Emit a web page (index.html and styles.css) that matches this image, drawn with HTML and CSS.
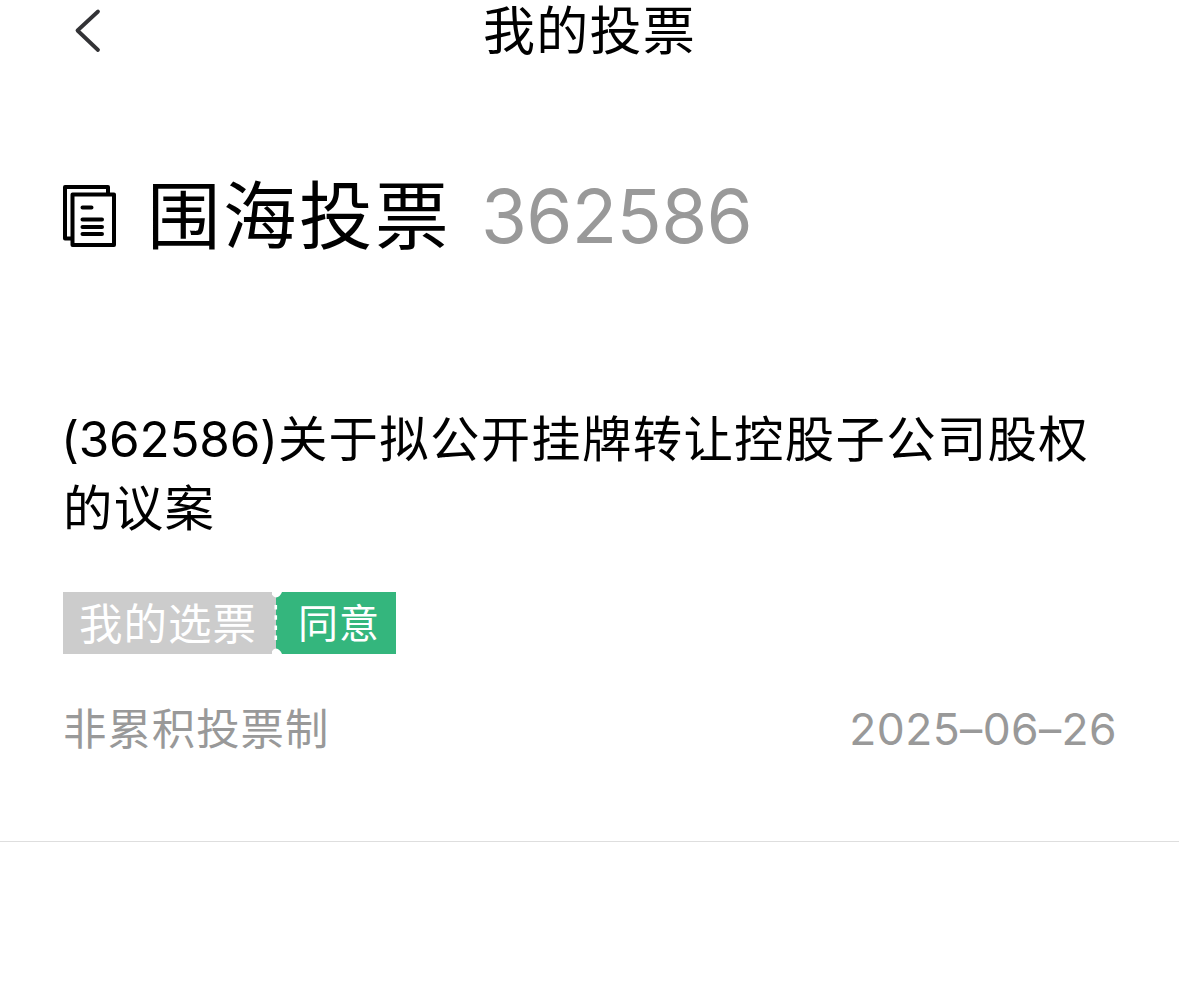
FILE: index.html
```
<!DOCTYPE html>
<html lang="zh-CN">
<head>
    <meta charset="UTF-8">
    <meta name="viewport" content="width=device-width, initial-scale=1.0">
    <title>我的投票</title>
    <link rel="stylesheet" href="styles.css">
</head>
<body>

<!-- 顶部导航 -->
<header class="navbar">
    <svg class="back" width="30" height="48" viewBox="0 0 30 48" fill="none" stroke="#333336" stroke-width="3.8" stroke-linecap="round" stroke-linejoin="round">
        <path d="M26 4.5 L5.5 23.5 L26 43"/>
    </svg>
    <h1 class="navbar-title">我的投票</h1>
</header>

<main class="content">
    <div class="meeting">
        <svg class="meeting-icon" width="54" height="64" viewBox="0 0 54 64" fill="none" stroke="#000" stroke-width="4" stroke-linejoin="round">
            <path d="M9 54.5 H2 V3 H45 V9"/>
            <rect x="9.5" y="10.5" width="41.5" height="50.5"/>
            <path d="M19.5 23.5 H28.5 M19.5 35.5 H39 M19.5 43 H39 M19.5 50 H39" stroke-linecap="round"/>
        </svg>
        <h2 class="meeting-name">围海投票</h2>
        <span class="meeting-code">362586</span>
    </div>

    <!-- 议案 -->
    <div class="proposal">
        <p class="proposal-title"><span class="code">(362586)</span>关于拟公开挂牌转让控股子公司股权<br>的议案</p>
        <div class="ticket">
            <span class="ticket-label">我的选票</span>
            <svg class="ticket-edge" width="10" height="62" viewBox="0 0 10 62">
                <rect width="4" height="62" fill="#ccc"/>
                <rect x="4" width="6" height="62" fill="#34b67d"/>
                <path d="M-1 0 Q0 5 4 5.5 Q8 5 10 0 Z" fill="#fff"/>
                <path d="M-1 62 Q0 57 4 56.5 Q8 57 10 62 Z" fill="#fff"/>
                <path d="M3.8 13 V50" stroke="#fff" stroke-width="2.6" stroke-dasharray="4.5 5.7"/>
            </svg>
            <span class="ticket-value">同意</span>
        </div>
        <div class="proposal-meta">
            <span>非累积投票制</span>
            <span class="date">2025–06–26</span>
        </div>
    </div>
</main>

</body>
</html>
```
FILE: styles.css
```
body {
    margin: 0;
    background: #fff;
    color: #000;
    font-family: Inter, "Noto Sans CJK SC", sans-serif;
}

h1, h2, p {
    margin: 0;
    font-weight: 400;
}

.navbar {
    display: grid;
    grid-template-columns: 1fr auto 1fr;
    align-items: center;
    height: 60px;
    padding: 0 72px;
}

.navbar-title {
    padding-top: 2px;
    font-size: 52px;
    letter-spacing: 1.3px;
    line-height: 60px;
}

.meeting {
    display: flex;
    align-items: center;
    height: 100px;
    padding: 106px 63px 0;
}

.meeting-icon {
    margin-right: 30px;
}

.meeting-name {
    padding-top: 2px;
    font-size: 73.5px;
    letter-spacing: 2.5px;
    line-height: 100px;
}

.meeting-code {
    margin-left: 30px;
    font-size: 74.5px;
    letter-spacing: -0.7px;
    line-height: 100px;
    color: #999;
}

.proposal {
    padding: 139px 63px 81px;
    border-bottom: 1px solid #dedede;
}

.proposal-title {
    font-size: 49.4px;
    letter-spacing: 1.3px;
    line-height: 69px;
}

.code {
    margin-left: -2px;
    letter-spacing: -0.2px;
}

.ticket {
    display: flex;
    height: 62px;
    margin-top: 49px;
    line-height: 64px;
    color: #fff;
}

.ticket-label {
    padding: 0 15px 0 16px;
    background: #ccc;
    font-size: 43.5px;
    letter-spacing: 1px;
}

.ticket-value {
    padding: 0 16px;
    background: #34b67d;
    font-size: 40px;
    letter-spacing: 1px;
}

.proposal-meta {
    display: flex;
    justify-content: space-between;
    margin-top: 45px;
    font-size: 43.4px;
    letter-spacing: 1px;
    line-height: 61px;
    color: #999;
}

.date {
    margin-right: -1px;
    font-size: 44.4px;
    letter-spacing: 0.4px;
}
```
